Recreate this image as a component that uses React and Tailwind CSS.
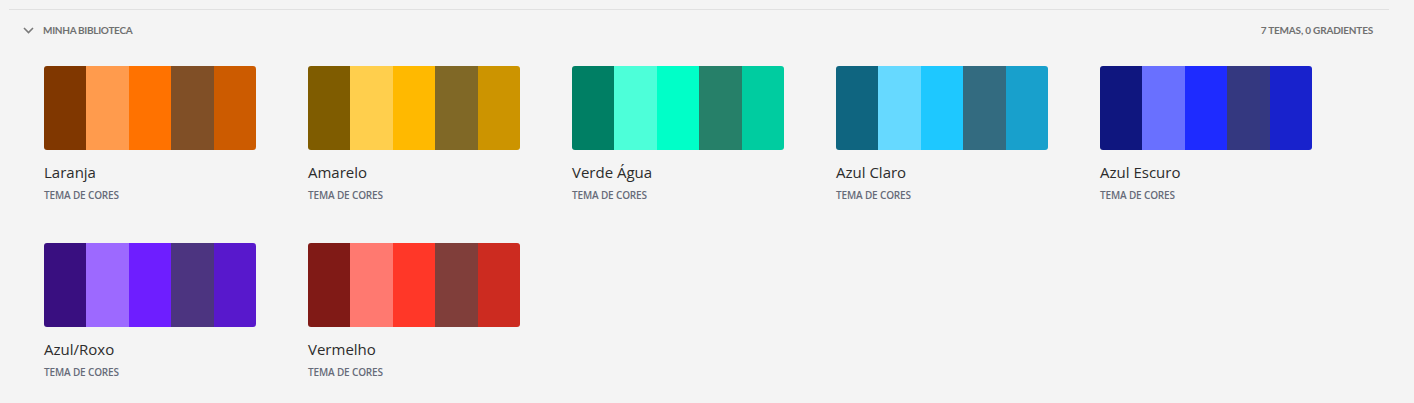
import React from 'react';

const themes = [
  { name: 'Laranja', colors: ['#803700', '#ff9b4d', '#ff7200', '#804f26', '#cc5b00'] },
  { name: 'Amarelo', colors: ['#7f5c00', '#ffcf4d', '#ffb900', '#806826', '#cc9400'] },
  { name: 'Verde Água', colors: ['#007f64', '#4dffd9', '#00ffc8', '#268069', '#00cca0'] },
  { name: 'Azul Claro', colors: ['#0f6580', '#66d9ff', '#1ec8ff', '#336b80', '#18a0cc'] },
  { name: 'Azul Escuro', colors: ['#0f167f', '#6970ff', '#1e2bff', '#343880', '#1822cc'] },
  { name: 'Azul/Roxo', colors: ['#390f80', '#9d69ff', '#6e1eff', '#4c3480', '#5818cc'] },
  { name: 'Vermelho', colors: ['#801a16', '#ff7970', '#ff3728', '#803e3a', '#cc2b20'] },
];

function ThemeCard({ theme }) {
  return (
    <div className="w-[212px]">
      {/* palette strip */}
      <div className="flex h-[84px] rounded-[3px] overflow-hidden">
        {theme.colors.map((c, i) => (
          <div key={i} className="flex-1" style={{ backgroundColor: c }} />
        ))}
      </div>
      <p className="mt-[14px] text-[15px] leading-[16px] text-[#2c2c2c]" style={{ fontFamily: '"Open Sans", sans-serif' }}>{theme.name}</p>
      <p className="mt-[9px] text-[10px] leading-[12px] font-semibold text-[#666b79] tracking-[-0.15px]" style={{ fontFamily: '"Open Sans", sans-serif' }}>TEMA DE CORES</p>
    </div>
  );
}

export default function App() {
  return (
    <div className="w-[1414px] h-[403px] bg-[#f4f4f4] pt-[9px] pl-[9px] pr-[25px]" style={{ fontFamily: 'Lato, "Open Sans", sans-serif' }}>
      <div className="border-t border-[#e1e1e1]">
        {/* Section header */}
        <div className="flex items-center justify-between h-[40px] pl-[14px] pr-[16px]">
          <div className="flex items-center">
            <svg width="11" height="7" viewBox="0 0 11 7" className="mr-[9px]">
              <path d="M1 1l4.5 4.5L10 1" fill="none" stroke="#7a7a7a" strokeWidth="1.6" />
            </svg>
            <span className="text-[10px] font-bold text-[#707070] tracking-[-0.3px]">MINHA BIBLIOTECA</span>
          </div>
          <span className="text-[10px] font-bold text-[#707070] tracking-[-0.2px]">7 TEMAS, 0 GRADIENTES</span>
        </div>

        {/* Themes grid */}
        <div className="grid grid-cols-[repeat(5,212px)] gap-x-[52px] gap-y-[42px] pl-[35px] mt-[16px]">
          {themes.map((t) => (
            <ThemeCard key={t.name} theme={t} />
          ))}
        </div>
      </div>
    </div>
  );
}
